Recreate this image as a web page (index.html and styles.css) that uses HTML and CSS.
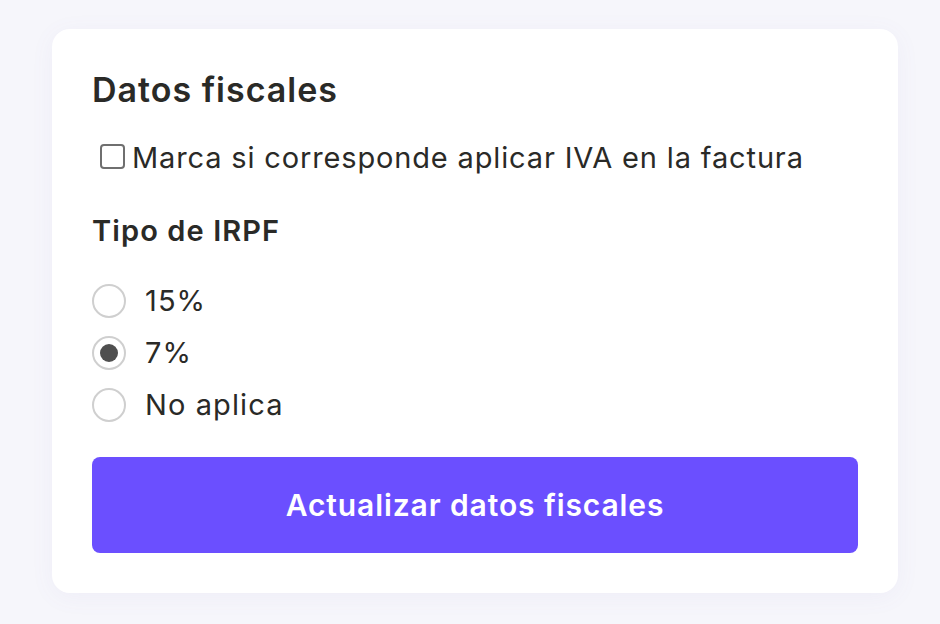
FILE: index.html
```html
<!DOCTYPE html>
<html lang="es">
<head>
<meta charset="utf-8">
<link rel="stylesheet" href="styles.css">
</head>
<body>
<main class="page">
  <section class="card">
    <h2 class="title">Datos fiscales</h2>
    <label class="check">
      <span class="box"></span>
      <span class="check-text">Marca si corresponde aplicar IVA en la factura</span>
    </label>
    <h3 class="subtitle">Tipo de IRPF</h3>
    <div class="radios">
      <label class="radio"><span class="dot"></span><span>15%</span></label>
      <label class="radio"><span class="dot on"></span><span>7%</span></label>
      <label class="radio"><span class="dot"></span><span>No aplica</span></label>
    </div>
    <button class="btn">Actualizar datos fiscales</button>
  </section>
</main>
</body>
</html>
```

FILE: styles.css
```css
* { box-sizing: border-box; }
html, body { margin: 0; padding: 0; }
body {
  background: #f6f6fb;
  font-family: "Inter", "Noto Sans", sans-serif;
  color: #2a2a27;
  width: 940px;
  height: 624px;
  overflow: hidden;
}
.page {
  padding: 29px 0 0 52px;
}
.card {
  width: 846px;
  height: 564px;
  background: #ffffff;
  border-radius: 18px;
  box-shadow: 0 4px 24px rgba(120, 110, 180, 0.06);
  padding: 41px 40px 0 40px;
  display: flex;
  flex-direction: column;
}
.title {
  margin: 0;
  font-size: 34px;
  font-weight: 600;
  line-height: 40px;
  letter-spacing: 1px;
}
.check {
  display: flex;
  align-items: center;
  margin-top: 31px;
  margin-left: 8px;
  gap: 7px;
  font-size: 29px;
  line-height: 34px;
  letter-spacing: 0.85px;
}
.box {
  width: 25px;
  height: 25px;
  margin-bottom: 4px;
  border: 2px solid #6f6f6f;
  border-radius: 4px;
  background: #fff;
  flex: none;
}
.subtitle {
  margin: 39px 0 0 0;
  font-size: 29px;
  font-weight: 600;
  line-height: 34px;
  letter-spacing: 1.1px;
}
.radios {
  display: flex;
  flex-direction: column;
  gap: 18px;
  margin-top: 36px;
}
.radio {
  display: flex;
  align-items: center;
  gap: 19px;
  font-size: 29px;
  line-height: 34px;
  letter-spacing: 1.1px;
}
.dot {
  width: 34px;
  height: 34px;
  border-radius: 50%;
  border: 2px solid #cfcfcf;
  background: #fff;
  flex: none;
  display: flex;
  align-items: center;
  justify-content: center;
}
.dot.on::after {
  content: "";
  width: 18px;
  height: 18px;
  border-radius: 50%;
  background: #4f4f4f;
}
.btn {
  margin-top: 35px;
  height: 96px;
  width: 766px;
  border: none;
  border-radius: 8px;
  background: #6b4fff;
  color: #ffffff;
  font-family: inherit;
  font-size: 30px;
  font-weight: 600;
  letter-spacing: 0.9px;
  cursor: pointer;
}
```
